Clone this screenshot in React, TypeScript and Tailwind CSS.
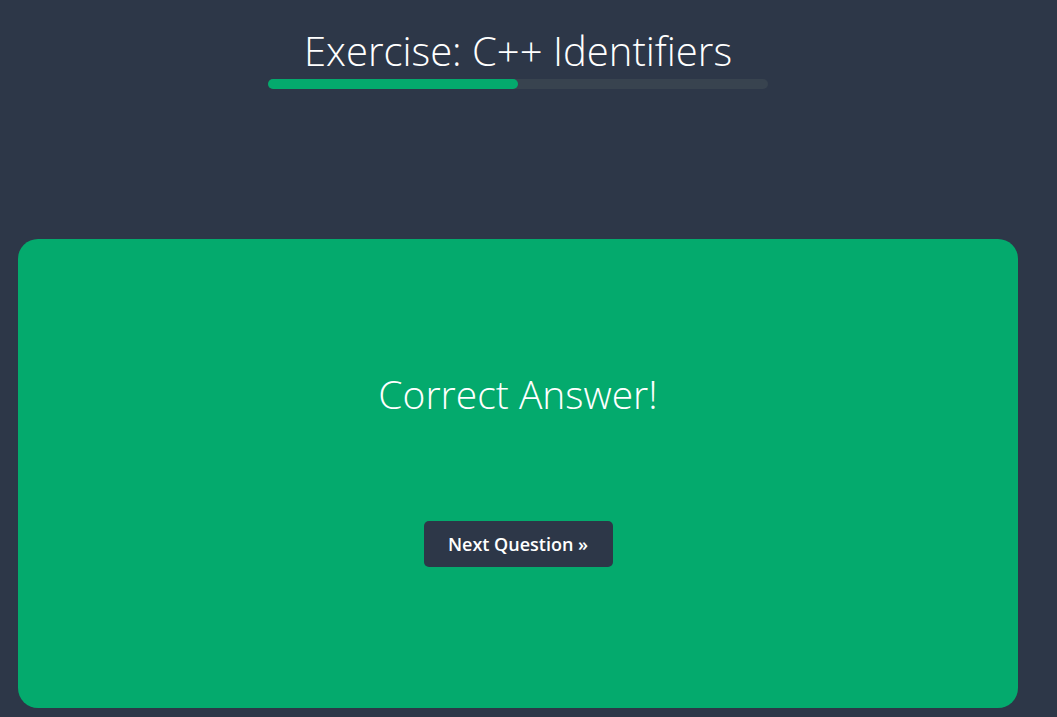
export default function App() {
  return (
    <div className="min-h-[717px] w-full bg-[#2d3748] font-['Open_Sans',sans-serif] text-white">
      <div className="ml-[18px] w-[1000px] pt-[27px]">
        <h1 className="text-center text-[40px] leading-[48px] font-light">Exercise: C++ Identifiers</h1>
        <div className="mx-auto mt-[4px] h-[10px] w-[500px] rounded-full bg-[#38434f]">
          <div className="h-full w-1/2 rounded-full bg-[#04aa6d]" />
        </div>
        <div className="mt-[150px] flex h-[469px] flex-col items-center rounded-[20px] bg-[#04aa6d]">
          <p className="mt-[131px] text-[39px] leading-[48px] font-light">Correct Answer!</p>
          <button
            type="button"
            className="mt-[103px] h-[46px] w-[189px] rounded-[5px] bg-[#2d3748] text-[18px] font-semibold"
          >
            Next Question »
          </button>
        </div>
      </div>
    </div>
  );
}
